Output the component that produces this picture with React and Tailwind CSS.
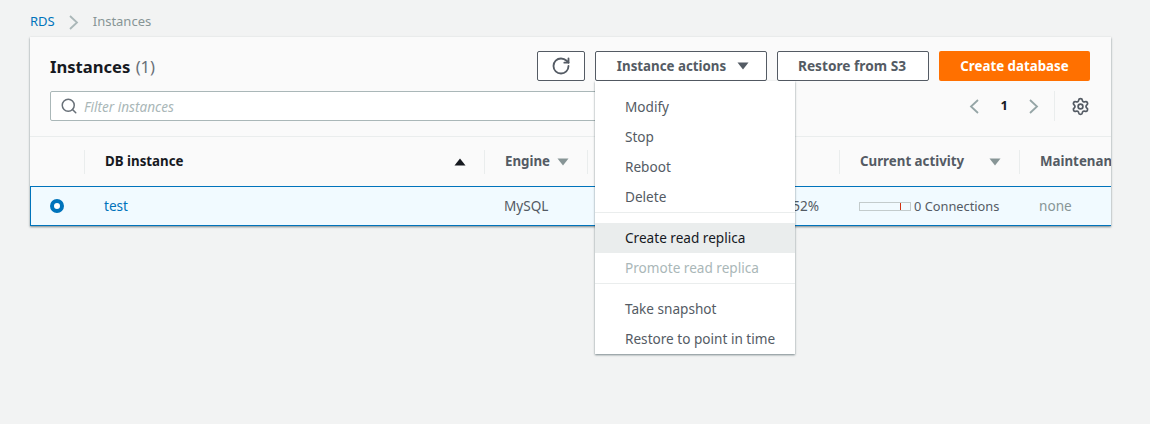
import { RotateCw, Search, Settings } from "lucide-react";

const Caret = ({ up, className }) => (
  <svg width="12" height="8" viewBox="0 0 12 8" className={className}>
    <path d={up ? "M6 0.5 L11.5 7.5 L0.5 7.5 Z" : "M0.5 0.5 L11.5 0.5 L6 7.5 Z"} fill="currentColor" />
  </svg>
);

const Chevron = ({ left, className }) => (
  <svg width="10" height="15" viewBox="0 0 10 15" className={className}>
    <path d={left ? "M9 1 L2 7.5 L9 14" : "M1 1 L8 7.5 L1 14"} fill="none" stroke="currentColor" strokeWidth="1.8" />
  </svg>
);

const MenuItem = ({ children, active, disabled }) => (
  <div
    className={`h-[30px] pl-[30px] flex items-center text-[13.6px] ${
      active ? "bg-[#eaeded] text-[#16191f]" : disabled ? "text-[#aab7b8]" : "text-[#545b64]"
    }`}
  >
    {children}
  </div>
);

const HeadCell = ({ children, width, dark, sorted, caretClass }) => (
  <div className={`${width} h-[49px] flex items-center shrink-0`}>
    <div className="h-[24px] w-full flex items-center justify-between border-l border-[#eaeded] pl-[20px] pr-[18px]">
      <span className={`font-bold text-[13.3px] whitespace-nowrap ${dark ? "text-[#16191f]" : "text-[#545b64]"}`}>{children}</span>
      {sorted && <Caret up className="text-[#16191f]" />}
      {caretClass && <Caret className={caretClass} />}
    </div>
  </div>
);

export default function App() {
  return (
    <div className="min-h-[424px] bg-[#f2f3f3] pt-[12px] px-[30px] font-['Noto_Sans',sans-serif]">
      {/* Breadcrumbs */}
      <div className="h-[20px] flex items-center text-[13px] gap-[14px]">
        <span className="text-[#0073bb]">RDS</span>
        <Chevron className="text-[#aab7b8]" />
        <span className="text-[#879596]">Instances</span>
      </div>

      {/* Card */}
      <div className="relative mt-[5px] w-[1081px] bg-[#fafafa] shadow-[0_1px_2px_rgba(0,28,36,0.5)]">
        <div className="h-[100px] pt-[14px] pl-[20px] pr-[21px] border-b border-[#eaeded]">
          <div className="flex items-center justify-between h-[30px]">
            <h1 className="text-[16.6px] pt-[2px] font-bold text-[#16191f]">
              Instances <span className="ml-[1px] font-normal text-[#687078]">(1)</span>
            </h1>
            <div className="flex items-center gap-[10px]">
              <button className="w-[48px] h-[30px] flex items-center justify-center bg-white border border-[#545b64] rounded-[2px] text-[#545b64]">
                <RotateCw size={20} strokeWidth={2.2} />
              </button>
              <div className="relative">
                <button className="w-[172px] h-[30px] pl-[4px] pt-[2px] flex items-center justify-center gap-[11px] bg-white border border-[#545b64] rounded-[2px] text-[#545b64] text-[13.3px] font-bold">
                  Instance actions <Caret className="-mt-[2px]" />
                </button>
                {/* Dropdown */}
                <div className="absolute z-10 left-0 top-[30px] w-[200px] bg-white shadow-[0_1px_2px_rgba(0,28,36,0.5)] pt-[11px]">
                  <MenuItem>Modify</MenuItem>
                  <MenuItem>Stop</MenuItem>
                  <MenuItem>Reboot</MenuItem>
                  <MenuItem>Delete</MenuItem>
                  <div className="mb-[10px] border-t border-[#eaeded]" />
                  <MenuItem active>Create read replica</MenuItem>
                  <MenuItem disabled>Promote read replica</MenuItem>
                  <div className="mb-[10px] border-t border-[#eaeded]" />
                  <MenuItem>Take snapshot</MenuItem>
                  <MenuItem>Restore to point in time</MenuItem>
                </div>
              </div>
              <button className="w-[152px] h-[30px] pt-[1px] pr-[2px] bg-white border border-[#545b64] rounded-[2px] text-[#545b64] text-[13.7px] font-bold">
                Restore from S3
              </button>
              <button className="w-[151px] h-[30px] pt-[2px] bg-[#ff7000] rounded-[2px] text-white text-[13.3px] font-bold">
                Create database
              </button>
            </div>
          </div>
          <div className="mt-[10px] flex items-center justify-between">
            <div className="w-[600px] h-[30px] flex items-center gap-[6px] pl-[9px] bg-white border border-[#aab7b8] rounded-[2px]">
              <Search size={18} strokeWidth={2} className="text-[#687078]" />
              <span className="italic text-[13.6px] pt-[2px] text-[#aab7b8]">Filter instances</span>
            </div>
            <div className="flex items-center h-[30px]">
              <Chevron left className="text-[#95a5a6]" />
              <span className="ml-[22px] mr-[21px] text-[13px] font-bold text-[#16191f]">1</span>
              <Chevron className="text-[#95a5a6]" />
              <div className="h-[30px] ml-[15px] pl-[16px] border-l border-[#eaeded] flex items-center">
                <Settings size={19} strokeWidth={2.2} className="text-[#545b64]" />
              </div>
            </div>
          </div>
        </div>

        {/* Table */}
        <div className="overflow-hidden">
          <div className="flex">
            <div className="w-[54px] h-[49px] shrink-0" />
            <HeadCell width="w-[400px]" dark sorted>DB instance</HeadCell>
            <HeadCell width="w-[103px]" caretClass="text-[#879596]">Engine</HeadCell>
            <HeadCell width="w-[252px]" />
            <HeadCell width="w-[180px]" caretClass="text-[#879596]">Current activity</HeadCell>
            <HeadCell width="w-[200px]">Maintenance</HeadCell>
          </div>
          <div className="flex items-center h-[40px] bg-[#f1faff] border border-r-0 border-[#0073bb] text-[13.6px] text-[#545b64]">
            <div className="w-[53px] shrink-0 pl-[19px] pb-[1px]">
              <div className="w-[14px] h-[14px] rounded-full border-[4px] border-[#0073bb] bg-white" />
            </div>
            <div className="w-[400px] shrink-0 pl-[20px] text-[#0073bb]">test</div>
            <div className="w-[103px] shrink-0 pl-[20px]">MySQL</div>
            <div className="w-[252px] shrink-0 pr-[20px] text-right">52%</div>
            <div className="w-[180px] shrink-0 pl-[20px] flex items-center gap-[3px] text-[12.8px]">
              <div className="relative w-[52px] h-[9px] border border-[#c3cbcc]">
                <div className="absolute left-[40px] top-0 bottom-0 w-px bg-[#d13212]" />
              </div>
              <span className="pt-[2px]">0 Connections</span>
            </div>
            <div className="pl-[20px] text-[#879596]">none</div>
          </div>
        </div>
      </div>
    </div>
  );
}
